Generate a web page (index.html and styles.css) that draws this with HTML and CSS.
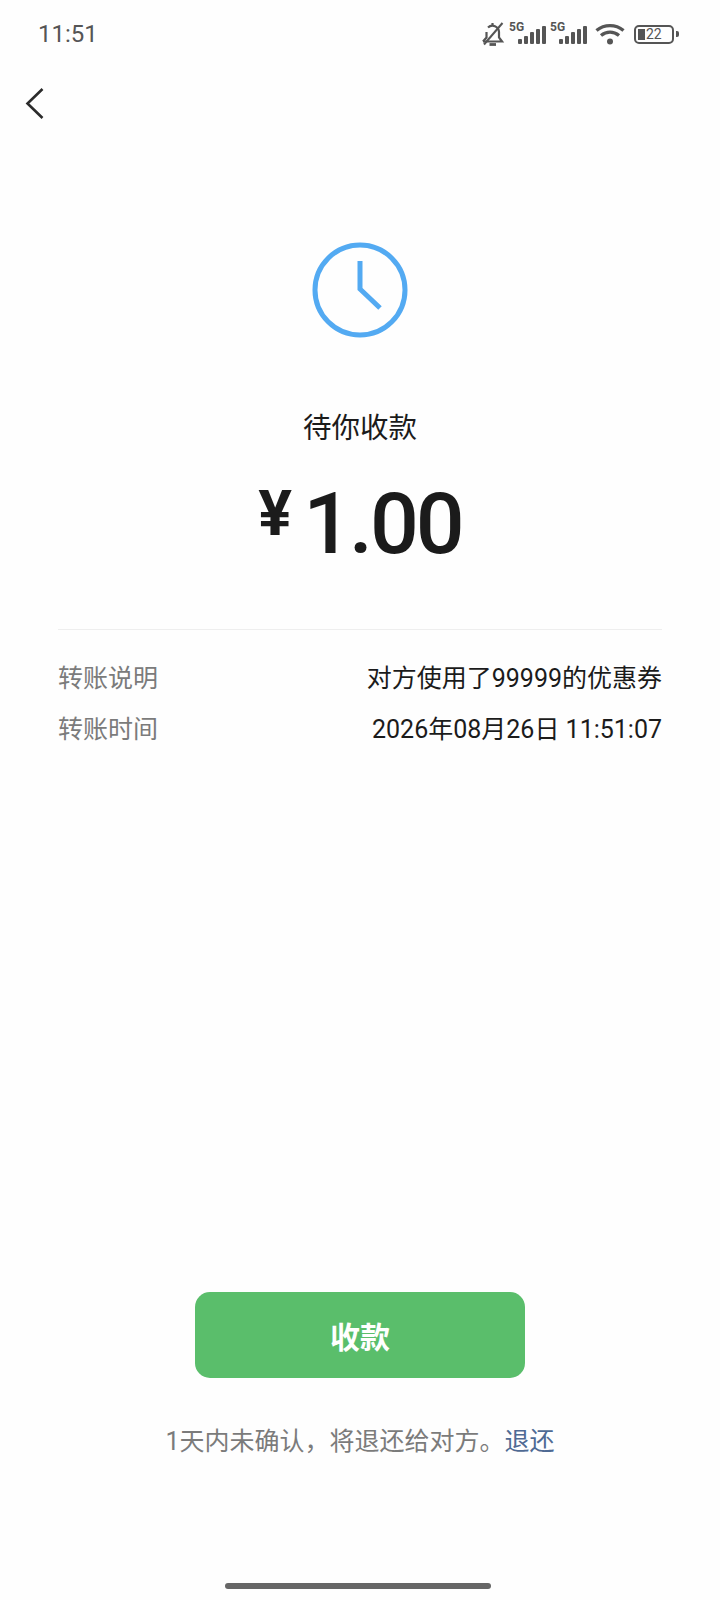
FILE: index.html
```html
<!DOCTYPE html>
<html lang="zh-CN">
<head>
    <meta charset="UTF-8">
    <meta name="viewport" content="width=device-width, initial-scale=1.0">
    <title>待你收款</title>
    <link rel="stylesheet" href="styles.css">
</head>
<body>
    <div class="page">
        <div class="status-bar">
            <span class="status-time">11:51</span>
            <div class="status-icons">
                <svg class="icon-bell" width="24" height="24" viewBox="0 0 24 24" fill="none" stroke="#555" stroke-width="2.200">
                    <path d="M2 19.500h19l-3-4V10a6.500 6.500 0 0 0-11-4.500"/>
                    <path d="M5.500 10v5.500l-3.500 4"/>
                    <path d="M8.500 22.500h6.500" stroke-width="2.800"/>
                    <path d="M11.500 1v2"/>
                    <path d="M3 22.500L21.500 1" stroke-width="2"/>
                </svg>
                <div class="signal">
                    <span class="signal-label">5G</span>
                    <svg width="28" height="19" viewBox="0 0 28 19" fill="#555">
                        <rect x="0" y="14" width="4" height="5" rx="1"/>
                        <rect x="6" y="11" width="4" height="8" rx="1"/>
                        <rect x="12" y="7" width="4" height="12" rx="1"/>
                        <rect x="18" y="4" width="4" height="15" rx="1"/>
                        <rect x="24" y="1" width="4" height="18" rx="1"/>
                    </svg>
                </div>
                <div class="signal">
                    <span class="signal-label">5G</span>
                    <svg width="28" height="19" viewBox="0 0 28 19" fill="#555">
                        <rect x="0" y="14" width="4" height="5" rx="1"/>
                        <rect x="6" y="11" width="4" height="8" rx="1"/>
                        <rect x="12" y="7" width="4" height="12" rx="1"/>
                        <rect x="18" y="4" width="4" height="15" rx="1"/>
                        <rect x="24" y="1" width="4" height="18" rx="1"/>
                    </svg>
                </div>
                <svg class="icon-wifi" width="30" height="22" viewBox="0 0 30 22" fill="none" stroke="#555" stroke-width="3.400">
                    <path d="M1.500 7.500c8-6.500 19-6.500 27 0"/>
                    <path d="M6 12.500c5.500-4.500 12.500-4.500 18 0"/>
                    <circle cx="15" cy="18.500" r="3" fill="#555" stroke="none"/>
                </svg>
                <div class="battery">
                    <div class="battery-body">
                        <span class="battery-fill"></span>
                        <span class="battery-text">22</span>
                    </div>
                    <span class="battery-cap"></span>
                </div>
            </div>
        </div>

        <div class="nav-bar">
            <svg width="20" height="32" viewBox="0 0 20 32" fill="none" stroke="#2b2b2b" stroke-width="2.600">
                <path d="M17.500 2L2.500 16.500 17.500 31"/>
            </svg>
        </div>

        <div class="summary">
            <svg class="clock" width="96" height="96" viewBox="0 0 96 96" fill="none" stroke="#53aaf2" stroke-width="5">
                <circle cx="48" cy="48" r="45"/>
                <path d="M48 19v28l20 19"/>
            </svg>
            <div class="summary-title">待你收款</div>
            <div class="amount">
                <span class="amount-sign">¥</span>
                <span class="amount-value">1.00</span>
            </div>
        </div>

        <div class="details">
            <div class="detail-row">
                <span class="detail-label">转账说明</span>
                <span class="detail-value">对方使用了99999的优惠券</span>
            </div>
            <div class="detail-row">
                <span class="detail-label">转账时间</span>
                <span class="detail-value">2026年08月26日 11:51:07</span>
            </div>
        </div>

        <div class="actions">
            <button class="receive-btn">收款</button>
            <p class="notice">1天内未确认，将退还给对方。<a class="notice-link">退还</a></p>
        </div>

        <div class="home-bar"></div>
    </div>
</body>
</html>
```

FILE: styles.css
```css
* {
    box-sizing: border-box;
}

body {
    margin: 0;
    background: #fefefe;
    font-family: "Roboto", "Noto Sans CJK SC", sans-serif;
    color: #1b1b1b;
}

.page {
    width: 720px;
    height: 1600px;
    display: flex;
    flex-direction: column;
}

.status-bar {
    height: 68px;
    padding: 0 41px 0 38px;
    display: flex;
    align-items: center;
    justify-content: space-between;
}

.status-time {
    font-size: 24px;
    color: #555;
}

.status-icons {
    display: flex;
    align-items: center;
    gap: 4px;
}

.signal {
    position: relative;
    width: 37px;
    height: 20px;
    display: flex;
    align-items: flex-end;
    justify-content: flex-end;
}

.signal-label {
    position: absolute;
    top: -3px;
    left: 0;
    font-size: 12px;
    font-weight: 700;
    line-height: 12px;
    color: #555;
}

.icon-wifi {
    margin-left: 4px;
}

.battery {
    margin-left: 5px;
    display: flex;
    align-items: center;
    gap: 2px;
}

.battery-body {
    width: 40px;
    height: 19px;
    padding: 2px;
    border: 2px solid #555;
    border-radius: 5px;
    display: flex;
    align-items: center;
    gap: 1px;
}

.battery-fill {
    width: 7px;
    height: 100%;
    background: #555;
}

.battery-text {
    font-size: 14px;
    line-height: 1;
    color: #555;
}

.battery-cap {
    width: 3px;
    height: 6px;
    background: #555;
    border-radius: 0 2px 2px 0;
}

.nav-bar {
    height: 66px;
    padding: 3px 0 0 25px;
    display: flex;
    align-items: center;
}

.summary {
    margin-top: 108px;
    display: flex;
    flex-direction: column;
    align-items: center;
}

.summary-title {
    margin-top: 71px;
    font-size: 28.500px;
    line-height: 40px;
}

.amount {
    margin-top: 26px;
    height: 98px;
    display: flex;
    align-items: flex-start;
    justify-content: center;
    gap: 11px;
}

.amount-sign {
    margin-top: 4px;
    font-size: 63px;
    font-weight: 700;
    line-height: 70px;
}

.amount-value {
    font-size: 86px;
    font-weight: 500;
    line-height: 98px;
    letter-spacing: -3px;
}

.details {
    margin: 56px 58px 0;
    padding-top: 20px;
    border-top: 1px solid #eeeeee;
}

.detail-row {
    height: 51px;
    display: flex;
    align-items: center;
    justify-content: space-between;
    font-size: 25px;
}

.detail-label {
    color: #7b7b7b;
}

.actions {
    margin-top: auto;
    display: flex;
    flex-direction: column;
    align-items: center;
}

.receive-btn {
    width: 330px;
    height: 86px;
    border: none;
    border-radius: 15px;
    background: #5abe6b;
    color: #fff;
    font-family: inherit;
    font-size: 30px;
    font-weight: 700;
}

.notice {
    margin: 46px 0 0;
    font-size: 25px;
    line-height: 36px;
    color: #7b7b7b;
}

.notice-link {
    color: #4f6a94;
}

.home-bar {
    width: 266px;
    height: 6px;
    margin: 123px 0 11px 225px;
    border-radius: 3px;
    background: #666;
}
```
